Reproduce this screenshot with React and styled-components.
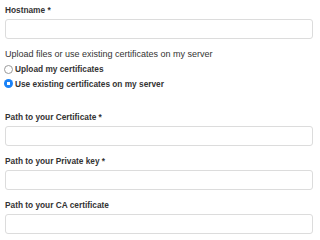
import React from "react";
import styled, { createGlobalStyle } from "styled-components";

const Global = createGlobalStyle`
  html, body { margin: 0; padding: 0; background: #ffffff; }
  body { font-family: "Liberation Sans", Arial, sans-serif; color: #333333; }
`;

const Form = styled.form`
  display: flex;
  flex-direction: column;
  padding: 4px 7px 0 5px;
  width: 320px;
  box-sizing: border-box;
`;

const Field = styled.div`
  display: flex;
  flex-direction: column;
  gap: 3px;
  margin-bottom: ${(p) => p.$mb ?? 9}px;
`;

const Label = styled.label`
  font-size: 8.3px;
  font-weight: bold;
  line-height: 12px;
  color: #333333;
  height: 12px;
`;

const Input = styled.input`
  box-sizing: border-box;
  width: 308px;
  height: 20px;
  border: 1px solid #dcdcdc;
  border-radius: 3px;
  background: #ffffff;
  outline: none;
  margin: 0;
  padding: 0 6px;
`;

const Group = styled.div`
  display: flex;
  flex-direction: column;
  margin-bottom: 20px;
`;

const GroupTitle = styled.div`
  font-size: 9px;
  line-height: 12px;
  height: 12px;
  color: #333333;
  margin-bottom: 2px;
`;

const Option = styled.label`
  display: flex;
  align-items: center;
  gap: 2px;
  height: 14.5px;
  font-size: 8.3px;
  font-weight: bold;
  color: #333333;
  margin-left: -1px;
`;

const Radio = styled.input.attrs({ type: "radio" })`
  appearance: none;
  -webkit-appearance: none;
  margin: 0;
  width: 9px;
  height: 9px;
  border-radius: 50%;
  box-sizing: border-box;
  border: 1px solid #9a9a9a;
  background: #ffffff;
  position: relative;
  flex: none;
  &:checked {
    border: none;
    background: radial-gradient(circle, #ffffff 0 1.6px, #1a82f7 2px);
  }
`;

export default function App() {
  return (
    <>
      <Global />
      <Form>
        <Field>
          <Label>Hostname *</Label>
          <Input />
        </Field>
        <Group>
          <GroupTitle>Upload files or use existing certificates on my server</GroupTitle>
          <Option>
            <Radio name="src" />
            Upload my certificates
          </Option>
          <Option>
            <Radio name="src" defaultChecked />
            Use existing certificates on my server
          </Option>
        </Group>
        <Field>
          <Label>Path to your Certificate *</Label>
          <Input />
        </Field>
        <Field>
          <Label>Path to your Private key *</Label>
          <Input />
        </Field>
        <Field>
          <Label>Path to your CA certificate</Label>
          <Input />
        </Field>
      </Form>
    </>
  );
}
